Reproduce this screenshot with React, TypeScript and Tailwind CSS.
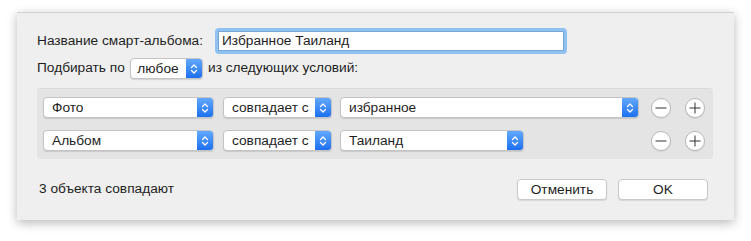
import React from "react";

function Chevrons() {
  return (
    <svg width="8" height="12" viewBox="0 0 8 12" fill="none">
      <path d="M1.5 4.5 L4 2 L6.5 4.5" stroke="white" strokeWidth="1.3" strokeLinecap="round" strokeLinejoin="round" />
      <path d="M1.5 7.5 L4 10 L6.5 7.5" stroke="white" strokeWidth="1.3" strokeLinecap="round" strokeLinejoin="round" />
    </svg>
  );
}

function Popup({ label, className }: { label: string; className: string }) {
  return (
    <div
      className={`flex h-[21px] items-stretch overflow-hidden rounded-[4px] border border-[#c4c4c4] bg-white shadow-[0_1px_1px_rgba(0,0,0,0.12)] ${className}`}
    >
      <div className="flex flex-1 items-center pl-[8px] text-[13.7px] leading-none text-[#1e1e1e]">{label}</div>
      <div className="flex w-[16px] items-center justify-center bg-gradient-to-b from-[#62a8fc] to-[#1a70ef]">
        <Chevrons />
      </div>
    </div>
  );
}

function RoundButton({ plus }: { plus?: boolean }) {
  return (
    <div className="flex h-[20px] w-[20px] items-center justify-center rounded-full border border-[#b8b8b8] bg-white shadow-[0_1px_1px_rgba(0,0,0,0.08)]">
      <svg width="12" height="12" viewBox="0 0 12 12">
        <path d="M0.5 6 H11.5" stroke="#333" strokeWidth="1" />
        {plus && <path d="M6 0.5 V11.5" stroke="#333" strokeWidth="1" />}
      </svg>
    </div>
  );
}

function PushButton({ label }: { label: string }) {
  return (
    <div className="flex h-[21px] w-[90px] items-center justify-center rounded-[4px] border border-[#c8c8c8] bg-white text-[13.7px] leading-none text-[#1e1e1e] shadow-[0_1px_1px_rgba(0,0,0,0.1)]">
      {label}
    </div>
  );
}

export default function App() {
  const rows = [
    { field: "Фото", value: "избранное", valueW: "w-[299px]" },
    { field: "Альбом", value: "Таиланд", valueW: "w-[184px]" },
  ];

  return (
    <div
      className="h-[241px] w-[751px] bg-white pl-[17px] pt-[12px]"
      style={{ fontFamily: '"Liberation Sans", Arial, sans-serif' }}
    >
      <div className="flex h-[208px] w-[717px] flex-col border-t border-[#d2d2d2] bg-[#efefef] pl-[20px] pr-[21px] pt-[15px] shadow-[0_3px_10px_rgba(0,0,0,0.28)]">
        <div className="flex items-center">
          <span className="w-[178px] text-[13.7px] text-[#1e1e1e]">Название смарт-альбома:</span>
          <div className="flex h-[26px] w-[352px] items-center rounded-[4px] bg-[#8fc1f1] p-[3px]">
            <div className="flex h-full w-full items-center border border-[#7aa6d4] bg-white pl-[3px] text-[13.7px] text-[#1e1e1e]">
              Избранное Таиланд
            </div>
          </div>
        </div>

        <div className="mt-[4px] flex items-center text-[13.7px] text-[#1e1e1e]">
          <span className="w-[93px]">Подбирать по</span>
          <div className="flex h-[21px] w-[73px] items-stretch overflow-hidden rounded-[4px] border border-[#c4c4c4] bg-white shadow-[0_1px_1px_rgba(0,0,0,0.12)]">
            <div className="flex flex-1 items-center justify-center pr-[1px] leading-none">любое</div>
            <div className="flex w-[16px] items-center justify-center bg-gradient-to-b from-[#62a8fc] to-[#1a70ef]">
              <Chevrons />
            </div>
          </div>
          <span className="ml-[5px]">из следующих условий:</span>
        </div>

        <div className="mt-[9px] flex h-[71px] flex-col gap-[12px] rounded-[4px] border-t border-[#dadada] bg-[#e4e4e4] pl-[6px] pr-[8px] pt-[8px]">
          {rows.map((r) => (
            <div key={r.field} className="flex items-center">
              <Popup label={r.field} className="w-[171px]" />
              <Popup label="совпадает с" className="ml-[9px] w-[109px]" />
              <Popup label={r.value} className={`ml-[8px] ${r.valueW}`} />
              <div className="ml-auto flex items-center gap-[14px]">
                <RoundButton />
                <RoundButton plus />
              </div>
            </div>
          ))}
        </div>

        <div className="mt-[20px] flex items-center pl-[2px] pr-[5px]">
          <span className="text-[13.7px] text-[#1e1e1e]">3 объекта совпадают</span>
          <div className="ml-auto flex gap-[11px]">
            <PushButton label="Отменить" />
            <PushButton label="OK" />
          </div>
        </div>
      </div>
    </div>
  );
}
